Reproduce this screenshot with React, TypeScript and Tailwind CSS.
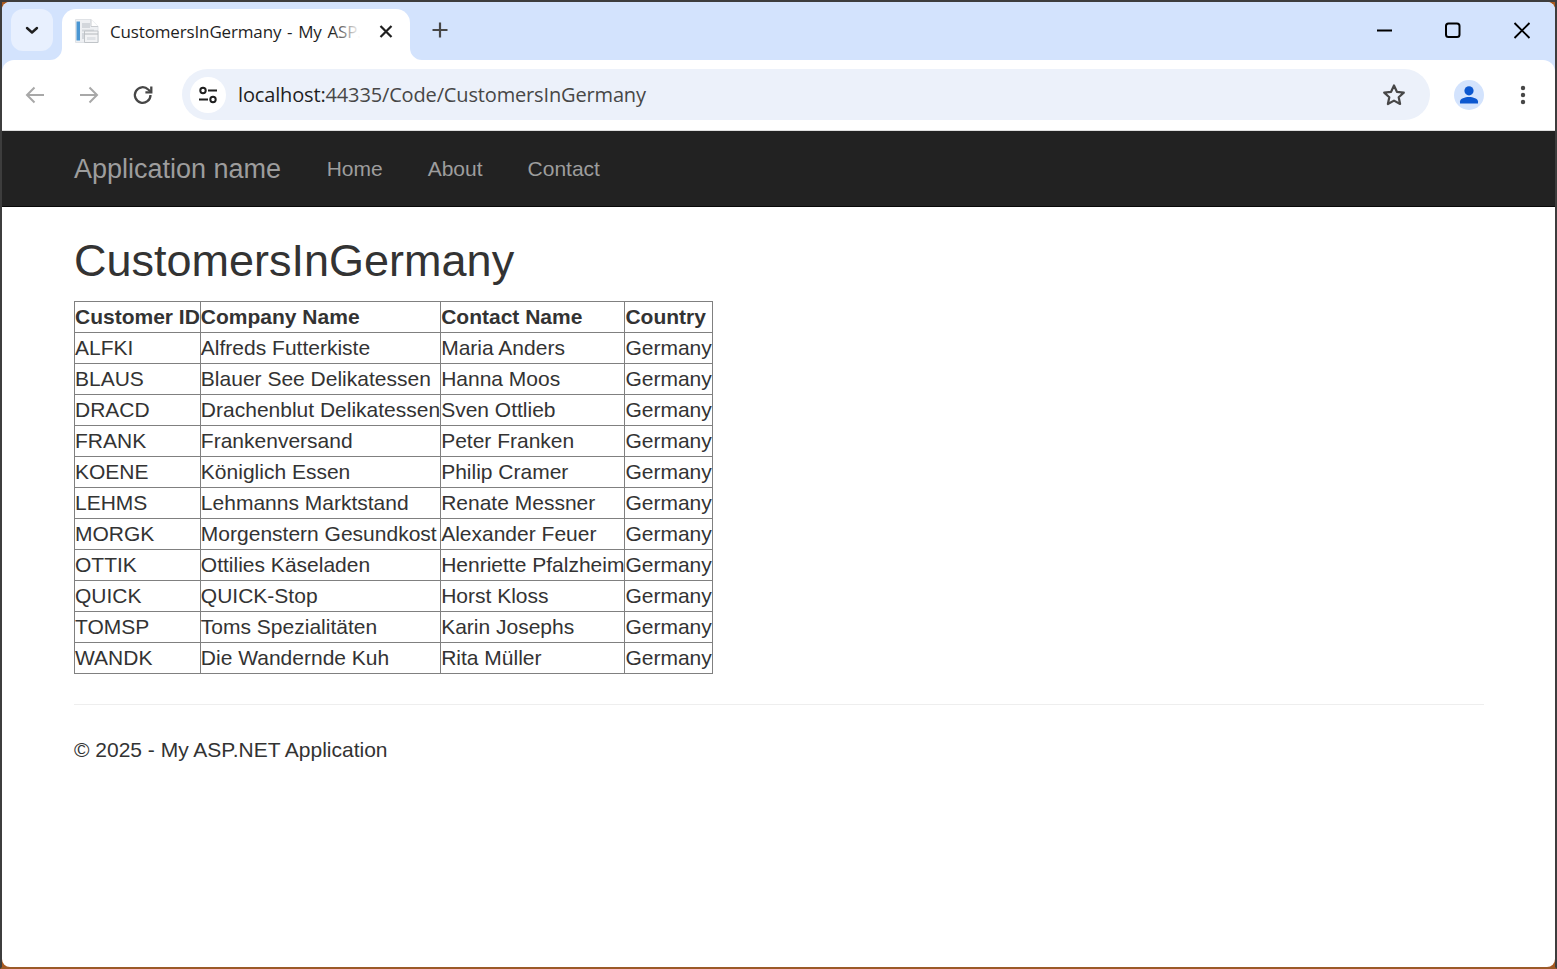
const customers = [
  ['ALFKI', 'Alfreds Futterkiste', 'Maria Anders', 'Germany'],
  ['BLAUS', 'Blauer See Delikatessen', 'Hanna Moos', 'Germany'],
  ['DRACD', 'Drachenblut Delikatessen', 'Sven Ottlieb', 'Germany'],
  ['FRANK', 'Frankenversand', 'Peter Franken', 'Germany'],
  ['KOENE', 'Königlich Essen', 'Philip Cramer', 'Germany'],
  ['LEHMS', 'Lehmanns Marktstand', 'Renate Messner', 'Germany'],
  ['MORGK', 'Morgenstern Gesundkost', 'Alexander Feuer', 'Germany'],
  ['OTTIK', 'Ottilies Käseladen', 'Henriette Pfalzheim', 'Germany'],
  ['QUICK', 'QUICK-Stop', 'Horst Kloss', 'Germany'],
  ['TOMSP', 'Toms Spezialitäten', 'Karin Josephs', 'Germany'],
  ['WANDK', 'Die Wandernde Kuh', 'Rita Müller', 'Germany'],
];

const headers = ['Customer ID', 'Company Name', 'Contact Name', 'Country'];

const BrowserChrome = () => (
  <div className="bg-[#d3e3fd] font-['Open_Sans',sans-serif]">
    {/* Tab strip */}
    <div className="flex h-[58px] items-start pl-[9px] pt-[7px]">
      <div className="flex h-[42px] w-[42px] items-center justify-center rounded-xl bg-[#e8f0fe]">
        <svg className="h-6 w-6" viewBox="0 0 24 24" fill="none" stroke="#1f1f1f" strokeWidth={2.4} strokeLinecap="round" strokeLinejoin="round">
          <path d="M7 10l5 4.5 5-4.5" />
        </svg>
      </div>
      <div className="relative ml-[9px] flex h-[51px] w-[348px] items-center rounded-t-[14px] bg-white pb-[6px] pl-[13px]">
        <svg className="absolute -left-3 bottom-0 h-3 w-3" viewBox="0 0 12 12"><path d="M12 0v12H0a12 12 0 0 0 12-12z" fill="#fff" /></svg>
        <svg className="absolute -right-3 bottom-0 h-3 w-3" viewBox="0 0 12 12"><path d="M0 0v12h12A12 12 0 0 1 0 0z" fill="#fff" /></svg>
        <svg className="h-[26px] w-[25px] shrink-0" viewBox="0 0 25 26">
          <path d="M0.5 0.5h15.5l7 7v16H0.5z" fill="#eef0f3" stroke="#dfe2e6" strokeWidth={1} />
          <path d="M1.5 2.5h3.5v19H1.5z" fill="#4a96d2" />
          <path d="M7 4h8v5H7zM7 10.5h12v2H7zM7 14h2v6H7z" fill="#d3d7dc" />
          <path d="M16 0.5v7h7" fill="#fff" stroke="#c9ccd0" strokeWidth={1} />
          <path d="M9.5 12h13.5v11.5H9.5z" fill="#f2f3f5" stroke="#c0c4c8" strokeWidth={1} />
          <path d="M9.5 15h13.5" stroke="#b4b8bc" strokeWidth={1} />
          <path d="M12 18h8.5v3H12z" fill="#dfe2e6" />
        </svg>
        <div className="relative ml-[10px] w-[250px] overflow-hidden whitespace-nowrap text-[17px] leading-6 tracking-[-0.15px] [word-spacing:1.5px] text-[#1f1f1f]">
          CustomersInGermany - My ASP.NET Application
          <div className="absolute inset-y-0 right-0 w-7 bg-gradient-to-r from-transparent to-white" />
        </div>
        <svg className="ml-[16px] h-5 w-5 shrink-0" viewBox="0 0 20 20" fill="none" stroke="#1f1f1f" strokeWidth={2.2}>
          <path d="M4.5 4l11 11M15.5 4l-11 11" />
        </svg>
      </div>
      <svg className="ml-[20px] mt-[11px] h-5 w-5" viewBox="0 0 20 20" fill="none" stroke="#474747" strokeWidth={2.2}>
        <path d="M10 2.5v15M2.5 10h15" />
      </svg>
      <div className="ml-auto flex">
        <svg className="mr-[50px] mt-[12px] h-[18px] w-[18px]" viewBox="0 0 18 18" stroke="#000" strokeWidth={2}><path d="M1 9.5h15" /></svg>
        <svg className="mr-[51px] mt-[12px] h-[18px] w-[18px]" viewBox="0 0 18 18" fill="none" stroke="#000" strokeWidth={2}><rect x="2" y="2.5" width="13.5" height="13.5" rx="2.5" /></svg>
        <svg className="mr-[24px] mt-[12px] h-[18px] w-[18px]" viewBox="0 0 18 18" fill="none" stroke="#000" strokeWidth={1.9}><path d="M1.5 2l15 15M16.5 2l-15 15" /></svg>
      </div>
    </div>

    {/* Toolbar */}
    <div className="flex h-[71px] items-center rounded-t-[12px] border-b border-b-[#dedede] bg-white pb-px pl-[21px]">
      <svg className="h-6 w-6" viewBox="0 0 24 24" fill="none" stroke="#a8a8a8" strokeWidth={2}>
        <path d="M21 12H4M11.5 4.5L4 12l7.5 7.5" />
      </svg>
      <svg className="ml-[30px] h-6 w-6" viewBox="0 0 24 24" fill="none" stroke="#a8a8a8" strokeWidth={2}>
        <path d="M3 12h17M12.5 4.5L20 12l-7.5 7.5" />
      </svg>
      <svg className="ml-[30px] h-6 w-6" viewBox="0 0 24 24" fill="none" stroke="#474747" strokeWidth={2.3}>
        <path d="M19.5 12a7.8 7.8 0 1 1-2.3-5.5L20 9" />
        <path d="M20.3 3.5V9.4h-5.9" />
      </svg>
      <div className="ml-[27px] flex h-[51px] w-[1248px] items-center rounded-full bg-[#ecf1fa] pl-2 pr-[23px]">
        <div className="flex h-9 w-9 items-center justify-center rounded-full bg-white">
          <svg className="h-[22px] w-[22px]" viewBox="0 0 22 22" fill="none" stroke="#1f1f1f" strokeWidth={2}>
            <circle cx="6" cy="6.5" r="2.7" />
            <path d="M11 6.5h9M2 15.5h9" />
            <circle cx="16" cy="15.5" r="2.7" />
          </svg>
        </div>
        <div className="ml-3 text-[20px] tracking-[-0.15px] text-[#474747]">
          <span className="text-[#1f1f1f]">localhost:</span>44335/Code/CustomersInGermany
        </div>
        <svg className="ml-auto h-[26px] w-[26px]" viewBox="0 0 26 26" fill="none" stroke="#474747" strokeWidth={2.2} strokeLinejoin="round">
          <path d="M13 3.5l2.9 6.3 6.9.8-5.1 4.6 1.4 6.8-6.1-3.4-6.1 3.4 1.4-6.8-5.1-4.6 6.9-.8z" />
        </svg>
      </div>
      <div className="ml-[24px] flex h-[30px] w-[30px] items-center justify-center rounded-full bg-[#d3e3fd]">
        <svg className="h-[22px] w-[22px]" viewBox="0 0 22 22" fill="#0b57d0">
          <circle cx="11" cy="6.8" r="4.6" />
          <path d="M2 19.5v-2c0-3 5-4.6 9-4.6s9 1.6 9 4.6v2z" />
        </svg>
      </div>
      <svg className="ml-[27px] h-6 w-6" viewBox="0 0 24 24" fill="#474747">
        <circle cx="12" cy="5" r="2.2" />
        <circle cx="12" cy="12" r="2.2" />
        <circle cx="12" cy="19" r="2.2" />
      </svg>
    </div>
  </div>
);

export default function App() {
  return (
    <div className="h-[969px] w-[1557px] overflow-hidden border-2 border-[#3d3d3d] border-b-[#9c5a28] bg-[#a85a20]">
      <div className="flex h-full flex-col overflow-hidden rounded-[8px] bg-white font-['Liberation_Sans',Arial,sans-serif] text-[21px] leading-[30px] text-[#333]">
        <BrowserChrome />

        <nav className="flex h-[76px] shrink-0 items-center border-b border-b-[#080808] bg-[#222] pl-[72px] text-[#9d9d9d]">
          <a className="text-[27px]">Application name</a>
          <a className="ml-[45.5px]">Home</a>
          <a className="ml-[45px]">About</a>
          <a className="ml-[45px]">Contact</a>
        </nav>

        <div className="pl-[72px] pr-[71px]">
          <h2 className="mb-[15px] mt-[29px] text-[45px] font-normal leading-[49.5px]">CustomersInGermany</h2>
          <table className="border-collapse">
            <thead>
              <tr>
                {headers.map((h) => (
                  <th key={h} className="whitespace-nowrap border border-[#808080] p-0 text-left font-bold">{h}</th>
                ))}
              </tr>
            </thead>
            <tbody>
              {customers.map((row) => (
                <tr key={row[0]}>
                  {row.map((cell, i) => (
                    <td key={i} className="whitespace-nowrap border border-[#808080] p-0">{cell}</td>
                  ))}
                </tr>
              ))}
            </tbody>
          </table>
          <hr className="my-[30px] border-0 border-t border-t-[#eee]" />
          <p>© 2025 - My ASP.NET Application</p>
        </div>
      </div>
    </div>
  );
}
